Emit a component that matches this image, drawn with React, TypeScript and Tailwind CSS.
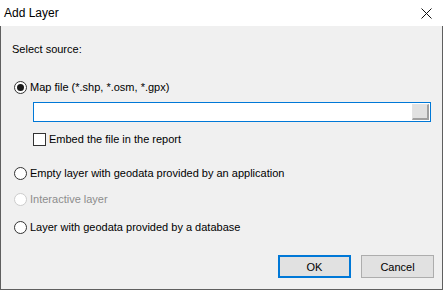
import React from 'react';

const font = { fontFamily: '"Liberation Sans", Arial, sans-serif' };

function Radio({ checked, disabled }: { checked?: boolean; disabled?: boolean }) {
  return (
    <span
      className={
        'flex h-[13px] w-[13px] shrink-0 items-center justify-center rounded-full border bg-white ' +
        (disabled ? 'border-[#cccccc]' : 'border-[#333333]')
      }
    >
      {checked && <span className="h-[7px] w-[7px] rounded-full bg-[#1a1a1a]" />}
    </span>
  );
}

function RadioRow({
  label,
  checked,
  disabled
}: {
  label: string;
  checked?: boolean;
  disabled?: boolean;
}) {
  return (
    <div className="flex h-[16px] items-center gap-[3px] pl-[13px]">
      <Radio checked={checked} disabled={disabled} />
      <span className={disabled ? 'text-[#8d8d8d]' : 'text-black'}>{label}</span>
    </div>
  );
}

export default function App() {
  return (
    <div
      className="flex h-[290px] w-[443px] flex-col bg-white text-[11px] leading-[16px] text-black"
      style={font}
    >
      <div className="flex h-[26px] shrink-0 items-center justify-between bg-white pl-[4px] pr-[11px]">
        <span className="text-[12px] text-black">Add Layer</span>
        <svg width="11" height="11" viewBox="0 0 11 11" className="mt-[1px]">
          <path d="M0.5 0.5 L10.5 10.5 M10.5 0.5 L0.5 10.5" stroke="#111" strokeWidth="1" />
        </svg>
      </div>
      <div className="flex flex-1 flex-col border-x border-b border-[#5f5f5f] bg-[#f0f0f0]">
        <div className="mt-[15px] pl-[11px]">Select source:</div>

        <div className="mt-[22px]">
          <RadioRow label="Map file (*.shp, *.osm, *.gpx)" checked />
        </div>

        <div className="ml-[32px] mr-[11px] mt-[7px] flex h-[20px] items-center justify-end border border-[#0078d7] bg-white pr-[1px]">
          <div className="h-[16px] w-[17px] border-b-[2px] border-r-[2px] border-l border-t border-b-[#a0a0a0] border-l-[#e3e3e3] border-r-[#a0a0a0] border-t-[#e3e3e3] bg-[#e1e1e1]" />
        </div>

        <div className="mt-[9px] flex h-[16px] items-center gap-[3px] pl-[32px]">
          <span className="h-[13px] w-[13px] border border-[#333333] bg-white" />
          <span>Embed the file in the report</span>
        </div>

        <div className="mt-[18px]">
          <RadioRow label="Empty layer with geodata provided by an application" />
        </div>
        <div className="mt-[10px]">
          <RadioRow label="Interactive layer" disabled />
        </div>
        <div className="mt-[12px]">
          <RadioRow label="Layer with geodata provided by a database" />
        </div>

        <div className="mt-auto mb-[11px] flex justify-end gap-[10px] pr-[8px]">
          <button className="h-[23px] w-[73px] border-2 border-[#0078d7] bg-[#e1e1e1] text-[11px] text-black">
            OK
          </button>
          <button className="h-[23px] w-[73px] border border-[#adadad] bg-[#e1e1e1] text-[11px] text-black">
            Cancel
          </button>
        </div>
      </div>
    </div>
  );
}
